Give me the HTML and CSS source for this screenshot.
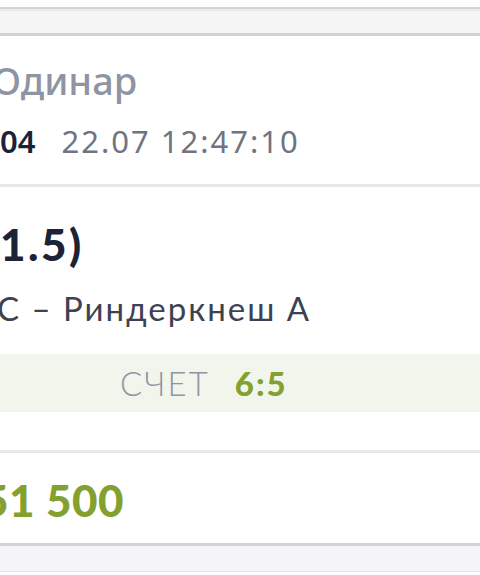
FILE: index.html
```html
<!DOCTYPE html>
<html lang="ru">

<head>
  <meta charset="UTF-8">
  <meta name="viewport" content="width=device-width, initial-scale=1.0">
  <title>Купон</title>
  <link rel="stylesheet" href="styles.css">
</head>

<body>
  <div class="receipt">
    <!-- верхняя полоса над купоном -->
    <div class="topbar"></div>

    <div class="card head">
      <div class="bet-type">Одинар</div>
      <div class="bet-meta">
        <span class="bet-id">04</span>
        <span class="bet-date">22.07 12:47:10</span>
      </div>
    </div>

    <div class="card event">
      <div class="outcome">1.5)</div>
      <div class="teams">С – Риндеркнеш А</div>
      <div class="score">
        <span class="score-label">СЧЕТ</span>
        <span class="score-value">6:5</span>
      </div>
    </div>

    <div class="card total">
      <div class="win">51 500</div>
    </div>

    <div class="footbar"></div>
  </div>
</body>

</html>
```

FILE: styles.css
```css
:root {
  --line: #d3d3d6;
  --line-soft: #e8e8ea;
  --navy: #1c2337;
  --text: #3c4251;
  --muted: #8f94a3;
  --green: #84a12f;
  --band: #f2f5eb;
}

body {
  margin: 0;
  background-color: #fdfdfd;
  overflow: hidden;
}

.receipt {
  padding-top: 7px;
  display: flex;
  flex-direction: column;
}

.topbar {
  height: 24px;
  background-color: #f5f5f5;
  border-top: 2px solid var(--line);
  border-bottom: 3px solid var(--line);
  box-shadow: inset 0 2px 0 #e9e9f0;
}

.card {
  background-color: #fff;
}

/* тип ставки и дата */
.head {
  padding: 20px 0 23px;
  font-family: "Noto Sans", sans-serif;
  border-bottom: 3px solid var(--line-soft);
}

.bet-type {
  margin-left: -8px;
  font-size: 38px;
  line-height: 48px;
  font-weight: 500;
  color: var(--muted);
}

.bet-meta {
  margin-top: 17px;
  display: flex;
  gap: 26px;
  font-size: 31px;
  line-height: 40px;
}

.bet-id {
  font-weight: 600;
  color: var(--navy);
}

.bet-date {
  letter-spacing: 2px;
  color: #6f7480;
}

/* событие */
.event {
  padding-top: 33px;
  font-family: Lato, "Open Sans", sans-serif;
}

.outcome {
  font-size: 44px;
  line-height: 48px;
  font-weight: 900;
  letter-spacing: 2.5px;
  color: var(--navy);
}

.teams {
  margin-top: 20px;
  margin-left: -3px;
  font-size: 33px;
  line-height: 40px;
  letter-spacing: 2px;
  color: var(--text);
}

.score {
  margin: 26px 0 38px;
  height: 58px;
  padding-left: 120px;
  display: flex;
  align-items: center;
  gap: 25px;
  background-color: var(--band);
  font-size: 33px;
  letter-spacing: 2px;
}

.score-label {
  font-weight: 300;
  color: var(--muted);
}

.score-value {
  font-weight: 900;
  color: var(--green);
}

.total {
  height: 90px;
  border-top: 3px solid var(--line-soft);
  border-bottom: 3px solid var(--line);
  display: flex;
  align-items: center;
  font-family: Lato, "Open Sans", sans-serif;
}

.win {
  margin: 4px 0 0 -17px;
  font-size: 44px;
  font-weight: 900;
  letter-spacing: 0.5px;
  color: var(--green);
}

.footbar {
  height: 25px;
  background-color: #f5f5f7;
  border-bottom: 1px solid #e3e3ea;
}
```
